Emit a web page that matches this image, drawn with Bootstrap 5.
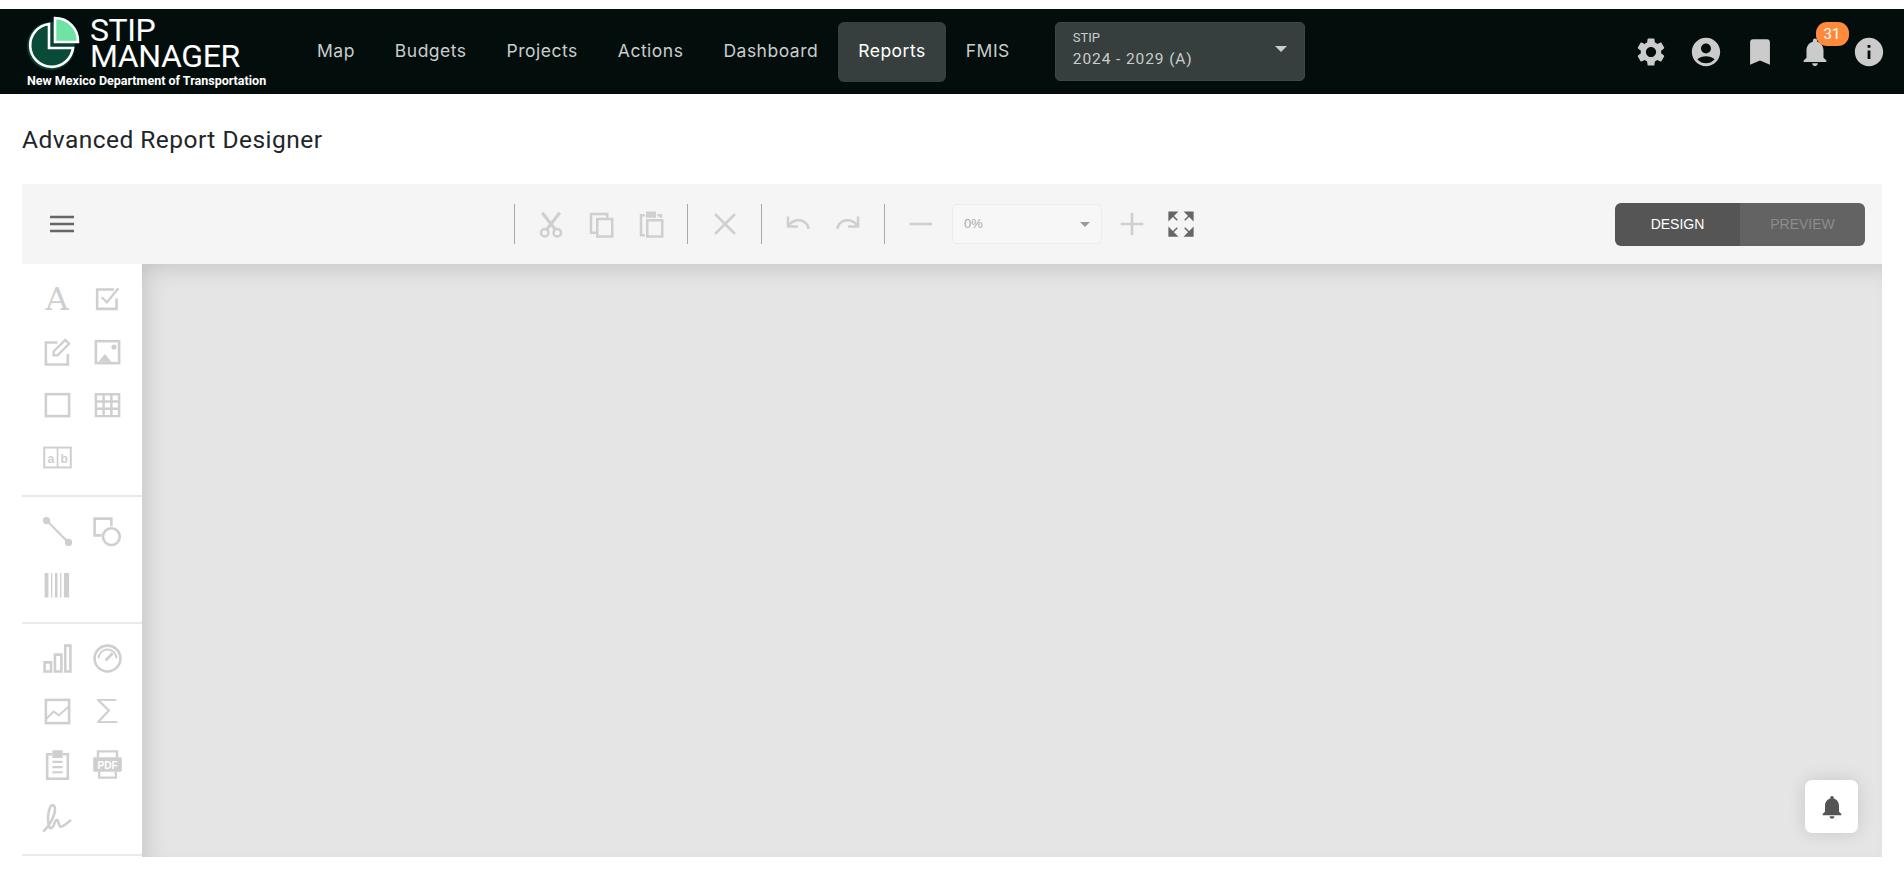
<!DOCTYPE html>
<html lang="en">
<head>
  <meta charset="UTF-8">
  <meta name="viewport" content="width=device-width, initial-scale=1.0">
  <title>Advanced Report Designer</title>
  <link href="https://cdn.jsdelivr.net/npm/bootstrap@5.3.0/dist/css/bootstrap.min.css" rel="stylesheet">
  <style>
    body { font-family: Roboto, "Liberation Sans", sans-serif; background: #fff; height: 882px; overflow: hidden; }

    /* top bar */
    .stip-bar { margin-top: 9px; height: 85px; background: #030e0c; padding: 0; }
    .stip-brand { width: 271px; margin-left: 26px; flex: none; }
    .stip-logo { width: 56px; height: 56px; flex: none; }
    .stip-name { color: #fff; font-size: 32px; line-height: 26px; font-weight: 400; letter-spacing: -.4px; margin: 2px 0 0 8px; }
    .stip-dept { color: #fff; font-family: "Liberation Sans Narrow", Roboto, sans-serif; font-size: 12.5px; font-weight: 700; line-height: 14px; margin: 3px 0 0 1px; white-space: nowrap; }
    .stip-menu .nav-link { font-family: Inter, sans-serif; font-size: 17.5px; letter-spacing: .5px; color: #c9cdcc; padding: 0 20px; height: 60px; line-height: 58px; border-radius: 6px; }
    .stip-menu .nav-link.active { background: #373f3e; color: #fff; }
    .stip-select { width: 250px; height: 59px; margin-left: 25px; background: #373f3e; border: 1px solid #3f4746; border-radius: 5px; color: #c9cdcc; padding: 3px 17px 8px; }
    .stip-select .caret-down { border-left-width: 6px; border-right-width: 6px; border-top-width: 6px; }
    .stip-select-label { font-size: 13px; line-height: 16px; }
    .stip-select-value { font-size: 15.5px; line-height: 20px; letter-spacing: .9px; margin-top: 3px; }
    .caret-down { width: 0; height: 0; border-left: 5px solid transparent; border-right: 5px solid transparent; border-top: 5px solid currentColor; }
    .stip-icons { gap: 20.5px; margin-right: 18px; }
    .stip-icons svg { width: 34px; height: 34px; fill: #cbcbcb; display: block; }
    .stip-count { top: -13px; left: 18px; width: 33px; height: 24px; border-radius: 11px; background: #ff8a3c; color: #fff; font-size: 15px; line-height: 24px; text-align: center; }

    /* page */
    .page-heading { font-size: 24.5px; font-weight: 400; line-height: 32px; letter-spacing: .47px; color: #212529; margin: 30px 0 28px; }
    .designer-wrap { padding: 0 22px; }

    /* designer toolbar */
    .designer-toolbar { height: 80px; background: #f5f5f5; padding: 0 17px 0 0; }
    .menu-btn { width: 80px; flex: none; }
    .tool-strip { margin-left: 412px; }
    .tool-slot { width: 50px; flex: none; display: flex; justify-content: center; align-items: center; }
    .tool-slot svg { width: 30px; height: 30px; fill: none; stroke: #cfcfcf; stroke-width: 2; display: block; }
    .slot-delete { width: 73px; }
    .slot-plus { width: 60px; }
    .slot-full { width: 38px; }
    .slot-full svg { fill: #666; stroke: #666; stroke-width: 1.2; }
    .after-sep { margin-left: 11px; }
    .before-sep { margin-right: 11px; }
    .tool-sep { width: 1px; height: 40px; background: #a9a9a9; flex: none; }
    .zoom-select { width: 150px; height: 40px; margin-left: 6px; background: #f7f7f7; border: 1px solid #ececec; border-radius: 5px; color: #a8a8a8; font-family: "Liberation Sans", sans-serif; font-size: 13px; padding: 0 11px; flex: none; }
    .zoom-select .caret-down { color: #999; }
    .mode-toggle { width: 250px; height: 43px; border-radius: 6px; overflow: hidden; font-family: "Liberation Sans", sans-serif; font-size: 14px; flex: none; }
    .mode-on { width: 125px; background: #555; color: #fff; }
    .mode-off { width: 125px; background: #636363; color: #8c8c8c; }

    /* designer body */
    .designer-body { height: 593px; }
    .tool-rail { width: 120px; flex: none; background: #fff; }
    .rail-group { display: grid; grid-template-columns: 50px 50px; justify-content: center; grid-auto-rows: 53px; justify-items: center; align-items: center; border-bottom: 2px solid #eaeaea; padding-top: 8px; padding-bottom: 11px; }
    .rail-group:last-child { padding-bottom: 10px; }
    .rail-group svg { width: 31px; height: 31px; fill: none; stroke: #cfcfcf; stroke-width: 2; display: block; }
    .rail-glyph { color: #cfcfcf; line-height: 30px; }
    .rail-a { font-family: "DejaVu Serif", serif; font-size: 32px; }
    .rail-sum { font-size: 33px; font-weight: 300; transform: scaleX(1.25); }
    .svg-label { font-family: "Liberation Sans", sans-serif; font-weight: 700; fill: #cfcfcf; stroke: none; }
    .svg-pdf { font-family: "Liberation Sans", sans-serif; font-weight: 700; fill: #fff; stroke: none; }
    .design-canvas { flex: 1; background: #e5e5e5; box-shadow: inset 10px 10px 24px -8px rgba(0,0,0,.16); }
    .bell-float { position: absolute; right: 46px; top: 780px; width: 53px; height: 53px; background: #fff; border-radius: 7px; box-shadow: 0 0 18px rgba(0,0,0,.13); }
    .bell-float svg { width: 28px; height: 28px; fill: #555; }
  </style>
</head>
<body>
  <nav class="navbar stip-bar flex-nowrap align-items-center">
    <div class="stip-brand">
      <div class="d-flex align-items-start">
        <svg class="stip-logo" viewBox="0 0 56 56">
          <circle cx="25" cy="31" r="24" fill="#0a3f31"/>
          <path d="M23 9 A 21.5 21.5 0 1 0 47 33 H 23 Z" fill="#0a4a39" stroke="#fff" stroke-width="2.6"/>
          <path d="M29 3 A 23 23 0 0 1 52 27 H 29 Z" fill="#6de3a4" stroke="#fff" stroke-width="2.6"/>
        </svg>
        <div class="stip-name">STIP<br>MANAGER</div>
      </div>
      <div class="stip-dept">New Mexico Department of Transportation</div>
    </div>

    <ul class="nav stip-menu flex-nowrap">
      <li class="nav-item"><a class="nav-link" href="#">Map</a></li>
      <li class="nav-item"><a class="nav-link" href="#">Budgets</a></li>
      <li class="nav-item"><a class="nav-link" href="#">Projects</a></li>
      <li class="nav-item"><a class="nav-link" href="#">Actions</a></li>
      <li class="nav-item"><a class="nav-link" href="#">Dashboard</a></li>
      <li class="nav-item"><a class="nav-link active" href="#">Reports</a></li>
      <li class="nav-item"><a class="nav-link" href="#">FMIS</a></li>
    </ul>

    <div class="stip-select d-flex align-items-center justify-content-between">
      <div>
        <div class="stip-select-label">STIP</div>
        <div class="stip-select-value">2024 - 2029 (A)</div>
      </div>
      <span class="caret-down"></span>
    </div>

    <div class="stip-icons d-flex align-items-center ms-auto">
      <svg viewBox="0 0 24 24"><path d="M19.14 12.94c.04-.3.06-.61.06-.94 0-.32-.02-.64-.07-.94l2.03-1.58c.18-.14.23-.41.12-.61l-1.92-3.32c-.12-.22-.37-.29-.59-.22l-2.39.96c-.5-.38-1.03-.7-1.62-.94l-.36-2.54c-.04-.24-.24-.41-.48-.41h-3.84c-.24 0-.43.17-.47.41l-.36 2.54c-.59.24-1.13.57-1.62.94l-2.39-.96c-.22-.08-.47 0-.59.22L2.74 8.87c-.12.21-.08.47.12.61l2.03 1.58c-.05.3-.09.63-.09.94s.02.64.07.94l-2.03 1.58c-.18.14-.23.41-.12.61l1.92 3.32c.12.22.37.29.59.22l2.39-.96c.5.38 1.03.7 1.62.94l.36 2.54c.05.24.24.41.48.41h3.84c.24 0 .44-.17.47-.41l.36-2.54c.59-.24 1.13-.56 1.62-.94l2.39.96c.22.08.47 0 .59-.22l1.92-3.32c.12-.22.07-.47-.12-.61l-2.01-1.58zM12 15.6c-1.98 0-3.6-1.62-3.6-3.6s1.62-3.6 3.6-3.6 3.6 1.62 3.6 3.6-1.62 3.6-3.6 3.6z"/></svg>
      <svg viewBox="0 0 24 24"><path d="M12 2C6.48 2 2 6.48 2 12s4.48 10 10 10 10-4.48 10-10S17.52 2 12 2zm0 4c1.93 0 3.5 1.57 3.5 3.5S13.93 13 12 13s-3.5-1.57-3.5-3.5S10.07 6 12 6zm0 14c-2.03 0-4.43-.82-6.14-2.88C7.55 15.8 9.68 15 12 15s4.45.8 6.14 2.12C16.43 19.18 14.03 20 12 20z"/></svg>
      <svg viewBox="0 0 24 24"><path d="M17 3H7c-1.1 0-1.99.9-1.99 2L5 21l7-3 7 3V5c0-1.1-.9-2-2-2z"/></svg>
      <div class="position-relative">
        <svg viewBox="0 0 24 24"><path d="M12 22c1.1 0 2-.9 2-2h-4c0 1.1.89 2 2 2zm6-6v-5c0-3.07-1.64-5.64-4.5-6.32V4c0-.83-.67-1.5-1.5-1.5s-1.5.67-1.5 1.5v.68C7.63 5.36 6 7.92 6 11v5l-2 2v1h16v-1l-2-2z"/></svg>
        <span class="stip-count position-absolute">31</span>
      </div>
      <svg viewBox="0 0 24 24"><path d="M12 2C6.48 2 2 6.48 2 12s4.48 10 10 10 10-4.48 10-10S17.52 2 12 2zm1 15h-2v-6h2v6zm0-8h-2V7h2v2z"/></svg>
    </div>
  </nav>

  <div class="designer-wrap">
    <h1 class="page-heading">Advanced Report Designer</h1>

    <!-- toolbar -->
    <div class="designer-toolbar d-flex align-items-center">
      <div class="menu-btn d-flex justify-content-center">
        <svg width="24" height="18" viewBox="0 0 24 18"><path d="M0 2h24M0 9h24M0 16h24" stroke="#666" stroke-width="2.4"/></svg>
      </div>
      <div class="tool-strip d-flex align-items-center">
        <span class="tool-sep"></span>
        <span class="tool-slot after-sep"><svg viewBox="0 0 24 24"><circle cx="7" cy="19" r="3"/><circle cx="17" cy="19" r="3"/><path d="M5 3 15.500 16.500M19 3 8.500 16.500" stroke-width="2.600"/></svg></span>
        <span class="tool-slot"><svg viewBox="0 0 24 24"><path d="M8 19H4V4h13v3"/><rect x="9" y="8" width="12" height="14"/></svg></span>
        <span class="tool-slot before-sep"><svg viewBox="0 0 24 24"><path d="M7 21H4V5h3M17 5h3v2"/><rect x="9" y="9" width="12" height="13"/><path d="M9 3h6v3H9z" fill="#cfcfcf"/></svg></span>
        <span class="tool-sep"></span>
        <span class="tool-slot slot-delete"><svg viewBox="0 0 24 24"><path d="M4 4l16 16M20 4 4 20"/></svg></span>
        <span class="tool-sep"></span>
        <span class="tool-slot after-sep"><svg viewBox="0 0 24 24"><path d="M4 6v8h8"/><path d="M4.500 13.500C8 8 15 7.500 19 12c1 1.400 1.200 2.400 1.500 4"/></svg></span>
        <span class="tool-slot before-sep"><svg viewBox="0 0 24 24"><path d="M20 6v8h-8"/><path d="M19.500 13.500C16 8 9 7.500 5 12c-1 1.400-1.200 2.400-1.500 4"/></svg></span>
        <span class="tool-sep"></span>
        <span class="tool-slot after-sep"><svg viewBox="0 0 24 24"><path d="M3 12h18"/></svg></span>
        <div class="zoom-select d-flex align-items-center justify-content-between"><span>0%</span><span class="caret-down"></span></div>
        <span class="tool-slot slot-plus"><svg viewBox="0 0 24 24"><path d="M3 12h18M12 3v18"/></svg></span>
        <span class="tool-slot slot-full"><svg viewBox="0 0 24 24"><path d="M2.500 2.500h6l-6 6zM5 5l4 4M21.500 2.500v6l-6-6zM19 5l-4 4M2.500 21.500v-6l6 6zM5 19l4-4M21.500 21.500h-6l6-6zM19 19l-4-4"/></svg></span>
      </div>
      <div class="mode-toggle d-flex ms-auto">
        <div class="mode-on d-flex align-items-center justify-content-center">DESIGN</div>
        <div class="mode-off d-flex align-items-center justify-content-center">PREVIEW</div>
      </div>
    </div>

    <!-- rail and canvas -->
    <div class="designer-body d-flex">
      <div class="tool-rail">
        <div class="rail-group">
          <span class="rail-glyph rail-a">A</span>
          <svg viewBox="0 0 24 24"><path d="M19 12v8H4V5h13"/><path d="M7.500 11l4 4 9-11" stroke-width="1.800"/></svg>
          <svg viewBox="0 0 24 24"><path d="M12 5H3v17h17v-8"/><path d="M9 12 18 3l3 3-9 9H9z" stroke-width="1.800"/></svg>
          <svg viewBox="0 0 24 24"><rect x="3" y="4" width="18" height="17"/><path d="M5 20l5-6 5 6z" fill="#cfcfcf" stroke="none"/><circle cx="17" cy="8.500" r="2" fill="#cfcfcf" stroke="none"/></svg>
          <svg viewBox="0 0 24 24"><rect x="3" y="4" width="18" height="17"/></svg>
          <svg viewBox="0 0 24 24"><path d="M3 4h18v17H3zM9 4v17M15 4v17M3 9.700h18M3 15.300h18" stroke-width="1.900"/></svg>
          <svg viewBox="0 0 28 24"><rect x="2" y="3" width="24" height="18" stroke-width="1.800"/><path d="M14 3v18" stroke-width="1.500"/><text class="svg-label" x="8" y="17" font-size="11" text-anchor="middle">a</text><text class="svg-label" x="20" y="17" font-size="11" text-anchor="middle">b</text></svg>
        </div>
        <div class="rail-group">
          <svg viewBox="0 0 24 24"><path d="M3.500 3.500l17 17" stroke-width="1.700"/><circle cx="3.500" cy="3.500" r="1.800" fill="#cfcfcf"/><circle cx="20.500" cy="20.500" r="1.800" fill="#cfcfcf"/></svg>
          <svg viewBox="0 0 24 24"><path d="M7.500 15H2V2h13v6"/><circle cx="15" cy="16" r="6.500"/></svg>
          <svg viewBox="0 0 24 24"><path d="M2 3h3v19H2zM7 3h1v19H7zM10 3h2v19h-2zM14 3h1v19h-1zM17 3h4v19h-4z" fill="#cfcfcf" stroke="none"/></svg>
        </div>
        <div class="rail-group">
          <svg viewBox="0 0 24 24"><path d="M2 15h5v7H2zM10 9h5v13h-5zM18 2h4v20h-4z"/></svg>
          <svg viewBox="0 0 24 24"><circle cx="12" cy="12" r="10"/><path d="M5 12a7 7 0 0 1 14 0" stroke-width="1.500"/><path d="M10.500 13.500 16 8" stroke-width="2.200"/></svg>
          <svg viewBox="0 0 24 24"><rect x="3" y="3" width="18" height="18"/><path d="M3 18l6-6 4 3 8-7" stroke-width="1.500"/></svg>
          <span class="rail-glyph rail-sum">&Sigma;</span>
          <svg viewBox="0 0 24 24"><path d="M8 4H4v19h16V4h-4"/><path d="M9 2h6v4H9z" fill="#cfcfcf"/><path d="M8 10h8M8 14h8M8 18h8" stroke-width="1.700"/></svg>
          <svg viewBox="0 0 26 26"><path d="M5 7V2h16v5M6 19v5h14v-5"/><rect x="1" y="7" width="24" height="12" rx="1" fill="#cfcfcf" stroke="none"/><text class="svg-pdf" x="13" y="16.500" font-size="8.500" text-anchor="middle">PDF</text></svg>
          <svg viewBox="0 0 24 24"><path d="M1 23C6 18 10.500 10 10 5 9.700 2 7.500 1.500 6.300 4 4.500 8 4 15 5.500 19c1 2.500 3 1 4-2 .7-2 1.500-3.500 2.500-3 1 .6.700 4 2 5 1.500 1 4.500-2 8.500-5"/></svg>
        </div>
      </div>
      <div class="design-canvas"></div>
    </div>
  </div>

  <button class="bell-float btn d-flex align-items-center justify-content-center p-0 border-0">
    <svg viewBox="0 0 24 24"><path d="M12 22c1.100 0 2-.9 2-2h-4c0 1.100.89 2 2 2zm6-6v-5c0-3.070-1.640-5.640-4.500-6.320V4c0-.83-.67-1.500-1.500-1.500s-1.500.67-1.500 1.500v.68C7.630 5.360 6 7.920 6 11v5l-2 2v1h16v-1l-2-2z"/></svg>
  </button>

  <script src="https://cdn.jsdelivr.net/npm/bootstrap@5.3.0/dist/js/bootstrap.bundle.min.js"></script>
</body>
</html>
